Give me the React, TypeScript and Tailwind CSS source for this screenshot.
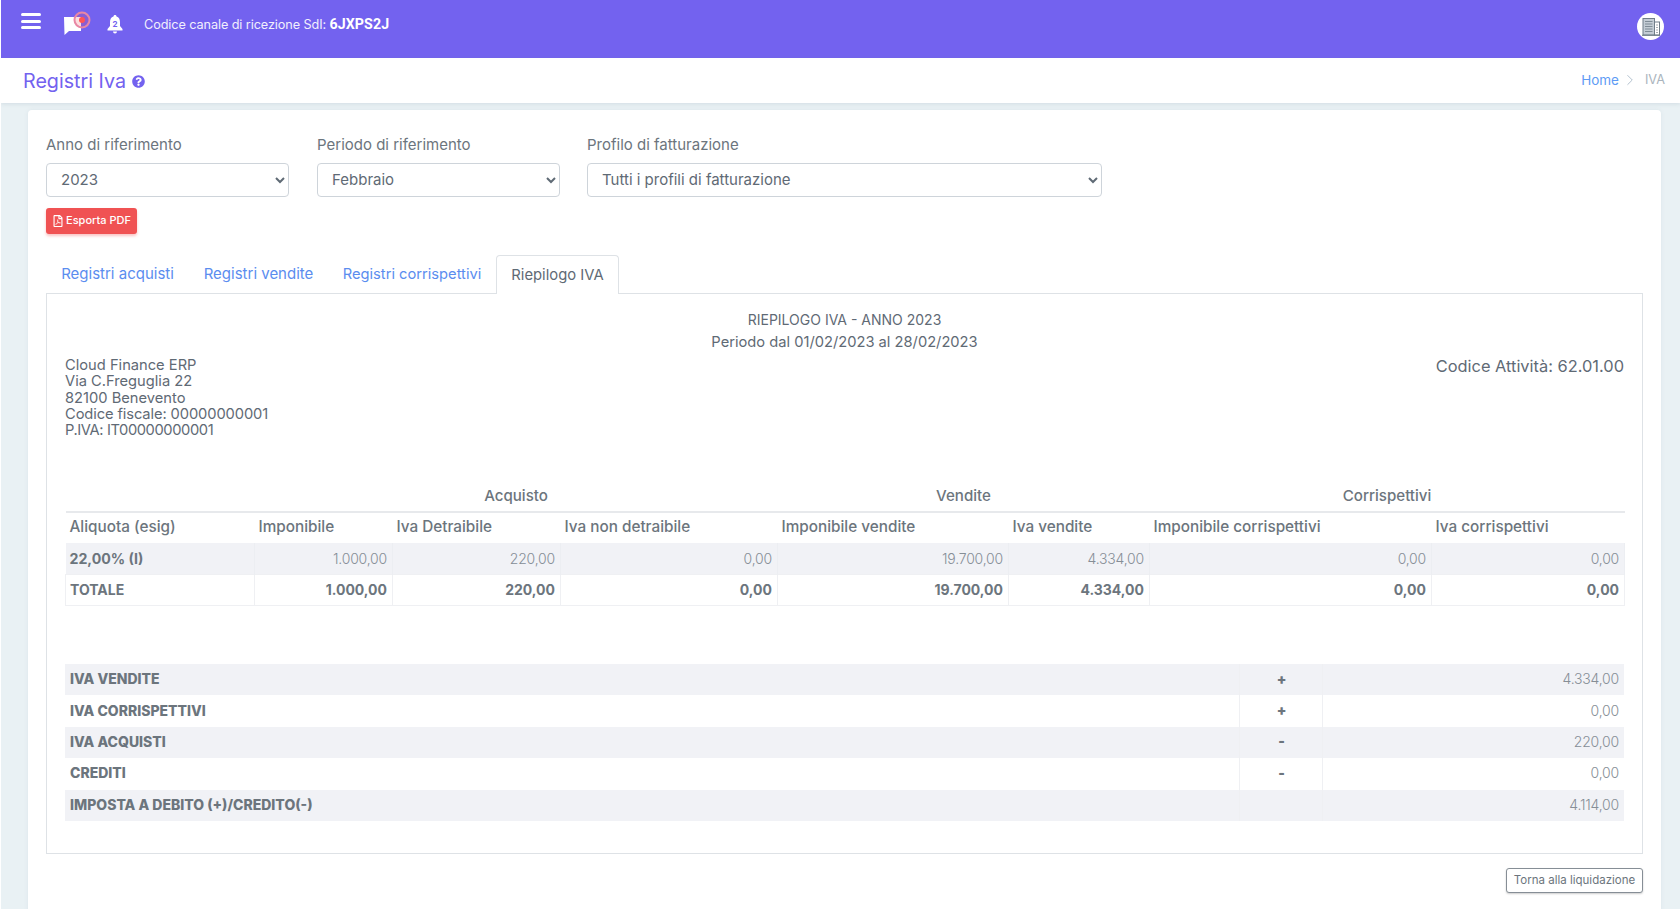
import { FaQuestionCircle, FaRegFilePdf } from "react-icons/fa";
import { ChevronRight } from "lucide-react";

const font = { fontFamily: "Inter, 'Noto Sans', sans-serif" };

const COLS = [189, 138, 168, 217, 231, 141, 282, 193];

const HEADERS = [
  "Aliquota (esig)",
  "Imponibile",
  "Iva Detraibile",
  "Iva non detraibile",
  "Imponibile vendite",
  "Iva vendite",
  "Imponibile corrispettivi",
  "Iva corrispettivi",
];

const ROW_VALUES = ["1.000,00", "220,00", "0,00", "19.700,00", "4.334,00", "0,00", "0,00"];
const TOTAL_VALUES = ["1.000,00", "220,00", "0,00", "19.700,00", "4.334,00", "0,00", "0,00"];

const SUMMARY = [
  { label: "IVA VENDITE", sign: "+", value: "4.334,00" },
  { label: "IVA CORRISPETTIVI", sign: "+", value: "0,00" },
  { label: "IVA ACQUISTI", sign: "-", value: "220,00" },
  { label: "CREDITI", sign: "-", value: "0,00" },
  { label: "IMPOSTA A DEBITO (+)/CREDITO(-)", sign: "", value: "4.114,00" },
];

function TopBar() {
  return (
    <header className="flex h-[58px] items-start bg-[#7362ef] pl-[20px] pr-[16px] text-white">
      <div className="mt-[13px] flex h-[16px] w-[20px] flex-col justify-between">
        <span className="h-[3px] rounded-full bg-white" />
        <span className="h-[3px] rounded-full bg-white" />
        <span className="h-[3px] rounded-full bg-white" />
      </div>
      <svg viewBox="0 0 30 26" className="ml-[22px] mt-[9px] h-[26px] w-[30px]">
        <path d="M1 8h17v14H6l-4.500 4z" fill="#fff" />
        <circle cx="19" cy="11" r="7.500" fill="#f0525330" stroke="#e887a4" strokeWidth="2" />
        <circle cx="19" cy="11" r="3" fill="#f55" />
      </svg>
      <svg viewBox="0 0 16 19" className="ml-[14px] mt-[15px] h-[19px] w-[16px]">
        <path d="M8 0c1 0 1.500.7 1.500 1.500C12 2.300 13 4.500 13 7v4l2.500 3v1.500H.5V14L3 11V7c0-2.500 1-4.700 3.500-5.500C6.500.7 7 0 8 0z" fill="#fff" />
        <path d="M6 16.500h4a2 2 0 0 1-4 0z" fill="#fff" />
        <text x="8" y="11.800" textAnchor="middle" fontSize="8" fontWeight="700" fill="#7362ef" fontFamily="Inter">2</text>
      </svg>
      <p className="ml-[21px] mt-[14px] whitespace-nowrap text-[12.700px] leading-[20px] tracking-[-0.1px] text-[#f1effd]">
        Codice canale di ricezione SdI:{" "}
        <b className="text-[14.200px] font-bold tracking-[0.1px] text-white" style={{ fontFamily: "Roboto, sans-serif" }}>
          6JXPS2J
        </b>
      </p>
      <div className="ml-auto mt-[13px] flex h-[27px] w-[27px] items-center justify-center rounded-full bg-white">
        <svg viewBox="0 0 20 20" className="h-[20px] w-[20px]">
          <rect x="2" y="1.500" width="11.500" height="16.500" fill="#c3ccd4" stroke="#6f7d88" strokeWidth="1" />
          <rect x="13.500" y="5" width="5" height="13" fill="#fff" stroke="#6f7d88" strokeWidth="1" />
          <path d="M4 4.500h7.500M4 7h7.500M4 9.500h7.500M4 12h7.500M4 14.500h7.500" stroke="#7f8c96" strokeWidth="1" />
          <path d="M16 7.500v1M16 10v1M16 12.500v1M16 15v1" stroke="#4d5860" strokeWidth="1" />
          <path d="M1 18.300h18" stroke="#6f7d88" strokeWidth="1" />
        </svg>
      </div>
    </header>
  );
}

function PageTitle() {
  return (
    <div className="relative flex h-[45px] items-center bg-white pl-[22px] pr-[15px] shadow-[0_1px_4px_rgba(120,140,160,0.2)]">
      <h1 className="text-[19.700px] font-normal leading-[24px] text-[#7362ef]">Registri Iva</h1>
      <FaQuestionCircle className="ml-[6px] mt-[1px] size-[13px] text-[#7362ef]" />
      <nav className="ml-auto flex items-center pb-[2px] text-[13.500px] leading-[20px]">
        <a className="text-[#5e9bf5]">Home</a>
        <ChevronRight className="mx-[2px] size-[18px] text-[#aebdcb]" strokeWidth={1.25} />
        <span className="ml-[4px] text-[12.700px] text-[#aab4bd]">IVA</span>
      </nav>
    </div>
  );
}

function Field({ label, value, options, className }: { label: string; value: string; options: string[]; className: string }) {
  return (
    <label className={`block ${className}`}>
      <span className="block h-[28px] text-[15px] leading-[20px] text-[#6c757d]">{label}</span>
      <select
        defaultValue={value}
        className="h-[34px] w-full rounded-[4px] border border-[#ced4da] bg-white pb-[1px] pl-[10px] pr-[4px] text-[15px] text-[#5f6a75]"
        style={font}
      >
        {options.map((o) => (
          <option key={o}>{o}</option>
        ))}
      </select>
    </label>
  );
}

function Tabs() {
  const links = [
    { label: "Registri acquisti", w: "w-[143px] text-[15px]" },
    { label: "Registri vendite", w: "w-[139px] text-[15px]" },
    { label: "Registri corrispettivi", w: "w-[168px] text-[14.700px]" },
  ];
  return (
    <div className="mt-[21px] flex h-[39px] leading-[20px]">
      {links.map((l) => (
        <a key={l.label} className={`${l.w} flex items-center justify-center whitespace-nowrap pb-[1px] text-[#5b8def]`}>
          {l.label}
        </a>
      ))}
      <span className="relative z-10 flex h-[39px] w-[123px] items-center justify-center rounded-t-[4px] border border-b-0 border-[#dee2e6] bg-white pb-[1px] text-[14.800px] text-[#5f6a75]">
        Riepilogo IVA
      </span>
    </div>
  );
}

function IvaTable() {
  return (
    <table className="mt-[41px] w-[1559px] table-fixed text-[14px] text-[#6c757d]">
      <colgroup>
        {COLS.map((w, i) => (
          <col key={i} style={{ width: w }} />
        ))}
      </colgroup>
      <thead>
        <tr className="h-[33px] border-b-2 border-[#e7e9ec] text-center text-[15.100px]">
          <th className="font-normal" />
          <th colSpan={3} className="pt-[2px] font-medium">Acquisto</th>
          <th colSpan={2} className="pt-[2px] font-medium">Vendite</th>
          <th colSpan={2} className="pt-[2px] font-medium">Corrispettivi</th>
        </tr>
        <tr className="h-[31px]">
          {HEADERS.map((h) => (
            <th key={h} className="whitespace-nowrap px-[4px] pb-[2px] text-left text-[15.300px] font-medium">{h}</th>
          ))}
        </tr>
      </thead>
      <tbody>
        <tr className="h-[31px] bg-[#f1f2f6]">
          <td className="border-r border-[#eceef2] px-[4px] text-[14.200px] font-bold">22,00% (I)</td>
          {ROW_VALUES.map((v, i) => (
            <td key={i} className="border-r border-[#eceef2] px-[5px] text-right font-light tracking-[-0.2px] text-[#868e96]">{v}</td>
          ))}
        </tr>
        <tr className="h-[31px] border border-[#eff0f3]">
          <td className="border-r border-[#eff0f3] px-[4px] font-bold">TOTALE</td>
          {TOTAL_VALUES.map((v, i) => (
            <td key={i} className="border-r border-[#eff0f3] px-[5px] pb-[1px] text-right font-bold">{v}</td>
          ))}
        </tr>
      </tbody>
    </table>
  );
}

function SummaryTable() {
  return (
    <table className="mt-[58px] w-[1559px] table-fixed text-[14px] text-[#6c757d]">
      <colgroup>
        <col style={{ width: 1174 }} />
        <col style={{ width: 83 }} />
        <col style={{ width: 302 }} />
      </colgroup>
      <tbody>
        {SUMMARY.map((r, i) => (
          <tr key={r.label} className={`h-[31.400px] ${i % 2 === 0 ? "bg-[#f1f2f6]" : "bg-white"}`}>
            <td className="whitespace-nowrap border-r border-[#eff0f3] px-[5px] pb-[2px] font-extrabold">{r.label}</td>
            <td className="border-r border-[#eff0f3] pb-[3px] pl-[2px] text-center font-black">{r.sign}</td>
            <td className="px-[5px] pb-[2px] text-right font-light tracking-[-0.2px] text-[#868e96]">{r.value}</td>
          </tr>
        ))}
      </tbody>
    </table>
  );
}

function Riepilogo() {
  return (
    <section className="-mt-px border border-[#dee2e6] px-[18px] pb-[32px] pt-[14px] text-[#6c757d]">
      <div className="text-center leading-[23px] text-[#5f6a75]">
        <p className="text-[14px]">RIEPILOGO IVA - ANNO 2023</p>
        <p className="text-[14.700px]">Periodo dal 01/02/2023 al 28/02/2023</p>
      </div>
      <div className="mt-[3px] flex items-start justify-between text-[#5f6a75]">
        <address className="text-[14.700px] not-italic leading-[16.300px]">
          Cloud Finance ERP
          <br />
          Via C.Freguglia 22
          <br />
          82100 Benevento
          <br />
          <span className="tracking-[-0.1px]">Codice fiscale: 00000000001</span>
          <br />
          <span className="tracking-[-0.4px]">P.IVA: IT00000000001</span>
        </address>
        <p className="text-[16.400px] leading-[18px]">Codice Attività: 62.01.00</p>
      </div>
      <IvaTable />
      <SummaryTable />
    </section>
  );
}

export default function App() {
  return (
    <div className="h-[909px] overflow-hidden border-l border-l-white bg-[#e9f1f4]" style={font}>
      <TopBar />
      <PageTitle />
      <main className="ml-[27px] mr-[19px] mt-[7px] h-[810px] rounded-t-[4px] bg-white px-[18px] pt-[25px] shadow-[0_0_4px_rgba(120,140,160,0.1)]">
        <div className="flex gap-[27px]">
          <Field className="w-[243px]" label="Anno di riferimento" value="2023" options={["2021", "2022", "2023"]} />
          <Field className="ml-[1px] w-[243px]" label="Periodo di riferimento" value="Febbraio" options={["Gennaio", "Febbraio", "Marzo"]} />
          <Field className="w-[515px]" label="Profilo di fatturazione" value="Tutti i profili di fatturazione" options={["Tutti i profili di fatturazione"]} />
        </div>
        <button className="mt-[11px] flex h-[26px] w-[91px] items-center justify-center rounded-[3px] bg-[#f05253] pb-[1px] text-[11px] font-medium text-white shadow-[0_2px_3px_rgba(240,82,83,0.35)]">
          <FaRegFilePdf className="mr-[2px] size-[12px]" />
          Esporta PDF
        </button>
        <Tabs />
        <Riepilogo />
        <div className="mt-[14px] flex justify-end">
          <button className="h-[25px] w-[137px] rounded-[3px] border border-[#868e96] bg-white text-[11.500px] text-[#6c757d] shadow-[0_1px_2px_rgba(0,0,0,0.2)]">
            Torna alla liquidazione
          </button>
        </div>
      </main>
    </div>
  );
}
